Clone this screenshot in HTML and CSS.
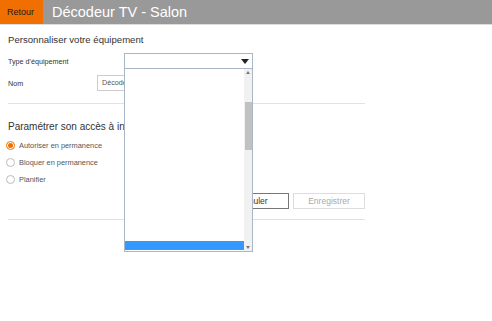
FILE: index.html
```html
<!DOCTYPE html>
<html lang="fr">
<head>
<meta charset="utf-8">
<title>Décodeur TV - Salon</title>
<link rel="stylesheet" href="styles.css">
</head>
<body>
<header class="topbar">
  <a class="back">Retour</a>
  <h1 class="title">Décodeur TV - Salon</h1>
</header>
<main class="content">
  <section class="block">
    <h2 class="heading">Personnaliser votre équipement</h2>
    <div class="row row-type">
      <span class="label label-type">Type d'équipement</span>
      <div class="select">
        <svg class="caret" width="8" height="5" viewBox="0 0 8 5"><path d="M0 0h8L4 5z" fill="#222"/></svg>
      </div>
    </div>
    <div class="row row-name">
      <span class="label label-name">Nom</span>
      <div class="input">Décodeur TV - Salon</div>
    </div>
  </section>
  <section class="block block-access">
    <h2 class="heading heading-lg">Paramétrer son accès à internet</h2>
    <ul class="radios">
      <li class="radio-item"><span class="radio checked"></span>Autoriser en permanence</li>
      <li class="radio-item"><span class="radio"></span>Bloquer en permanence</li>
      <li class="radio-item"><span class="radio"></span>Planifier</li>
    </ul>
    <div class="actions">
      <button class="btn btn-cancel">Annuler</button>
      <button class="btn btn-save" disabled>Enregistrer</button>
    </div>
  </section>
</main>
<div class="dropdown">
  <div class="options">
    <div class="option selected"></div>
  </div>
  <div class="scrollbar">
    <svg class="arrow" width="4" height="3" viewBox="0 0 4 3"><path d="M0 3h4L2 0z" fill="#777"/></svg>
    <div class="track"><div class="thumb"></div></div>
    <svg class="arrow" width="4" height="3" viewBox="0 0 4 3"><path d="M0 0h4L2 3z" fill="#777"/></svg>
  </div>
</div>
</body>
</html>
```

FILE: styles.css
```css
* { box-sizing: border-box; }
html, body { margin: 0; padding: 0; background: #fff; min-height: 100vh; }
body { font-family: "Liberation Sans", Arial, sans-serif; color: #333; position: relative; }

.topbar {
  display: flex;
  align-items: stretch;
  height: 25px;
  background: #999;
  border-bottom: 1px solid #dcdcdc;
}
.back {
  display: flex;
  align-items: center;
  width: 43px;
  padding-left: 7px;
  background: #f16e00;
  color: #1a1a1a;
  font-size: 9px;
}
.title {
  margin: 0 0 0 9px;
  font-weight: normal;
  font-size: 14.5px;
  color: #fff;
  line-height: 24px;
}

.content { width: 365px; padding-left: 8px; }
.block { border-bottom: 1px solid #e2e2e2; }
.heading {
  margin: 0;
  font-weight: normal;
  font-size: 9.6px;
  color: #333;
}
.heading-lg { font-size: 10px; }
.block:first-child .heading { padding-top: 9px; height: 28px; }
.row { display: flex; align-items: center; }
.label { font-size: 7.2px; color: #333; }
.label-type { width: 116px; }
.label-name { width: 89px; }
.row-type { height: 16px; }
.row-name { height: 16px; margin-top: 6px; }
.select {
  width: 129px;
  height: 16px;
  border: 1px solid #a9b6c6;
  display: flex;
  align-items: center;
  justify-content: flex-end;
  padding-right: 3px;
}
.input {
  width: 150px;
  height: 16px;
  border: 1px solid #ccc;
  font-size: 7.2px;
  padding-left: 4px;
  line-height: 14px;
  color: #555;
  white-space: nowrap;
  overflow: hidden;
}
.block:first-child { padding-bottom: 12px; }

.block-access { padding-top: 16px; padding-bottom: 10px; }
.block-access .heading { height: 13px; line-height: 13px; }
.radios { list-style: none; margin: 4px 0 0 -2px; padding: 0; }
.radio-item {
  display: flex;
  align-items: center;
  height: 17px;
  font-size: 7.4px;
  color: #555;
}
.radio {
  width: 9px;
  height: 9px;
  border: 1px solid #bbb;
  border-radius: 50%;
  margin-right: 4px;
  display: flex;
  align-items: center;
  justify-content: center;
}
.radio.checked { border-color: #f16e00; }
.radio.checked::after {
  content: "";
  width: 5px;
  height: 5px;
  border-radius: 50%;
  background: #f16e00;
}
.actions { display: flex; justify-content: flex-end; gap: 4px; margin-top: 5px; }
.btn {
  width: 72px;
  height: 16px;
  background: #fff;
  font-family: "Liberation Sans", Arial, sans-serif;
  font-size: 8.5px;
  padding: 0;
}
.btn-cancel { border: 1px solid #777; color: #333; }
.btn-save { border: 1px solid #ddd; color: #aaa; }

.dropdown {
  position: absolute;
  left: 124px;
  top: 69px;
  width: 129px;
  height: 183px;
  border: 1px solid #a9b6c6;
  border-top: none;
  background: #fff;
  display: flex;
}
.options { flex: 1; display: flex; flex-direction: column; justify-content: flex-end; }
.option.selected { height: 9px; background: #3399ff; margin-bottom: 1px; }
.scrollbar {
  width: 8px;
  background: #f1f1f1;
  display: flex;
  flex-direction: column;
  align-items: center;
}
.arrow { margin: 2px 0; flex: none; }
.track { flex: 1; width: 8px; padding-top: 26px; }
.thumb { height: 48px; width: 7px; margin-left: 1px; background: #c1c1c1; }
```
